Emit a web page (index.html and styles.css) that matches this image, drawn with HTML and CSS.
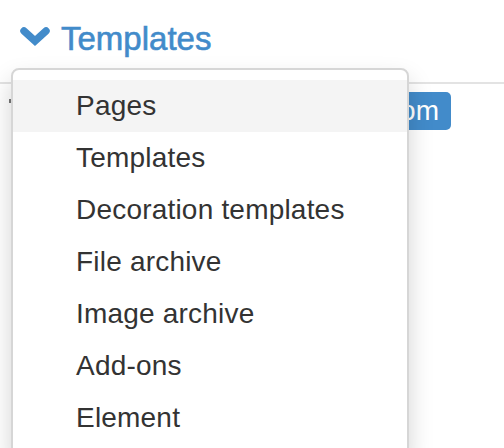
FILE: index.html
```html
<!DOCTYPE html>
<html lang="en">
<head>
<meta charset="UTF-8">
<title>Templates</title>
<link rel="stylesheet" href="styles.css">
</head>
<body>
<div class="wrap">
    <div class="head">
        <svg class="chev" width="30" height="20" viewBox="0 0 30 20"><polyline points="4,4 15,14 26,4" fill="none" stroke="#428bca" stroke-width="7.5" stroke-linecap="round" stroke-linejoin="miter"/></svg>
        <h1 class="title">Templates</h1>
    </div>
    <div class="row">
        <span class="caret"></span>
        <button class="btn">Custom</button>
    </div>

    <ul class="menu">
        <li class="item active">Pages</li>
        <li class="item">Templates</li>
        <li class="item">Decoration templates</li>
        <li class="item">File archive</li>
        <li class="item">Image archive</li>
        <li class="item">Add-ons</li>
        <li class="item">Element</li>
    </ul>
</div>
</body>
</html>
```
FILE: styles.css
```css
body{
    margin: 0;
    background: #fff;
    font-family: "Liberation Sans", Arial, sans-serif;
    overflow: hidden;
}
.wrap{
    position: relative;
    width: 504px;
    height: 448px;
    overflow: hidden;
}
.head{
    display: flex;
    align-items: flex-start;
    box-sizing: border-box;
    height: 84px;
    padding: 20px 0 0 20px;
    border-bottom: 2px solid #e3e3e3;
}
.chev{
    display: block;
    margin-top: 7px;
    margin-right: 11px;
}
.title{
    margin: 0;
    font-size: 33px;
    line-height: 38px;
    font-weight: normal;
    color: #428bca;
    -webkit-text-stroke: 0.6px #428bca;
}
.row{
    display: flex;
    justify-content: space-between;
    align-items: flex-start;
    margin-top: 8px;
    padding: 0 53px 0 9px;
}
.caret{
    display: block;
    width: 3px;
    height: 4px;
    margin-top: 7px;
    background: #777;
}
.btn{
    height: 38px;
    padding: 0 12px;
    border: none;
    border-radius: 5px;
    background: #428bca;
    color: #fff;
    font-family: inherit;
    font-size: 28px;
    line-height: 38px;
}

/* dropdown over the page */
.menu{
    position: absolute;
    left: 11px;
    top: 68px;
    width: 398px;
    box-sizing: border-box;
    margin: 0;
    padding: 10px 0;
    list-style: none;
    background: #fff;
    border: 2px solid #d6d6d6;
    border-radius: 8px;
    box-shadow: 0 12px 24px rgba(0,0,0,.175);
}
.item{
    padding: 6px 20px 6px 63px;
    font-size: 28px;
    line-height: 40px;
    letter-spacing: 0.2px;
    color: #333;
}
.item.active{
    background: #f4f4f4;
}
```
